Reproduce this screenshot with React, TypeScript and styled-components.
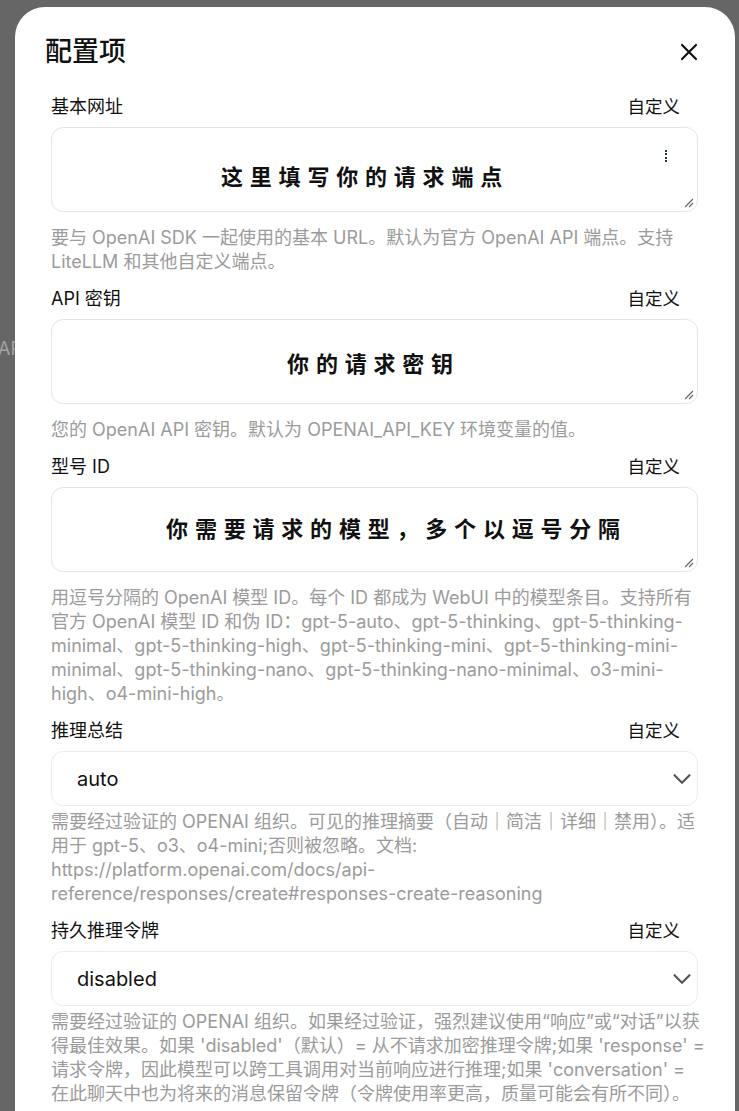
import React from 'react'
import styled, { createGlobalStyle } from 'styled-components'

const GlobalStyle = createGlobalStyle`
  html, body {
    margin: 0;
    padding: 0;
  }
  body {
    background: #666;
    font-family: Inter, 'Noto Sans CJK SC', sans-serif;
    overflow: hidden;
  }
`

const Screen = styled.div`
  position: relative;
  height: 1111px;
  padding: 7px 4px 0 15px;
  box-sizing: border-box;
  overflow: hidden;
`
// page text peeking out from behind the dialog
const BehindText = styled.span`
  position: absolute;
  left: -2px;
  top: 338px;
  font-size: 18px;
  color: #a3a3a3;
`
const Modal = styled.div`
  position: relative;
  background: #fff;
  border-radius: 30px 30px 0 0;
  padding: 29px 37px 0 30px;
  min-height: 1104px;
  box-sizing: border-box;
`
const Header = styled.div`
  display: flex;
  align-items: center;
  justify-content: space-between;
  height: 32px;
  margin-bottom: 25px;
`
const Title = styled.h2`
  margin: 0;
  font-size: 27px;
  font-weight: 500;
  line-height: 32px;
  color: #111;
`
const CloseButton = styled.button`
  display: flex;
  border: 0;
  padding: 0;
  background: none;
  cursor: pointer;
`
const Fields = styled.div`
  display: flex;
  flex-direction: column;
  padding-left: 6px;
`
const Field = styled.div`
  display: flex;
  flex-direction: column;
  margin-bottom: 11px;
`
const LabelRow = styled.div`
  display: flex;
  align-items: center;
  justify-content: space-between;
  height: 24px;
  margin-bottom: 10px;
  font-size: 18px;
  color: #111;
`
const CustomToggle = styled.span`
  padding-right: 18px;
  font-size: 17.5px;
  cursor: pointer;
`
const InputBox = styled.div<{ $lift: number }>`
  position: relative;
  height: 85px;
  border: 1px solid #e6e6e6;
  border-radius: 12px;
  box-sizing: border-box;
  display: flex;
  align-items: center;
  justify-content: center;
  padding-top: ${(p) => Math.max(0, p.$lift)}px;
  padding-bottom: ${(p) => Math.max(0, -p.$lift)}px;
`
const Hint = styled.span<{ $shift: number }>`
  font-family: 'Noto Sans CJK SC', sans-serif;
  font-size: 22px;
  font-weight: 700;
  letter-spacing: 6.8px;
  color: #111;
  margin-left: ${(p) => p.$shift}px;
`
const Caret = styled.span`
  position: absolute;
  top: 22px;
  right: 30px;
  height: 12px;
  border-left: 2px dotted #1d3557;
`
const Grip = styled.svg`
  position: absolute;
  right: 3px;
  bottom: 3px;
`
const SelectBox = styled.div`
  height: 55px;
  border: 1px solid #ececec;
  border-radius: 12px;
  box-sizing: border-box;
  display: flex;
  align-items: center;
  justify-content: space-between;
  padding: 0 0 0 25px;
  font-size: 20px;
  color: #111;
`
const Help = styled.div<{ $gap: number }>`
  margin-top: ${(p) => p.$gap}px;
  font-size: 18px;
  line-height: 24px;
  color: #9b9b9b;
`
const HelpLine = styled.span`
  display: block;
  white-space: nowrap;
`

type TextField = { kind: 'text'; label: string; hint: string; shift: number; lift: number; caret?: boolean; help: string[] }
type ChoiceField = { kind: 'select'; label: string; value: string; help: string[] }

const fields: (TextField | ChoiceField)[] = [
  {
    kind: 'text',
    label: '基本网址',
    hint: '这里填写你的请求端点',
    shift: -19,
    lift: 10,
    caret: true,
    help: [
      '要与 OpenAI SDK 一起使用的基本 URL。默认为官方 OpenAI API 端点。支持',
      'LiteLLM 和其他自定义端点。',
    ],
  },
  {
    kind: 'text',
    label: 'API 密钥',
    hint: '你的请求密钥',
    shift: -2,
    lift: 0,
    help: ['您的 OpenAI API 密钥。默认为 OPENAI_API_KEY 环境变量的值。'],
  },
  {
    kind: 'text',
    label: '型号 ID',
    hint: '你需要请求的模型，多个以逗号分隔',
    shift: 44,
    lift: -6,
    help: [
      '用逗号分隔的 OpenAI 模型 ID。每个 ID 都成为 WebUI 中的模型条目。支持所有',
      '官方 OpenAI 模型 ID 和伪 ID：gpt-5-auto、gpt-5-thinking、gpt-5-thinking-',
      'minimal、gpt-5-thinking-high、gpt-5-thinking-mini、gpt-5-thinking-mini-',
      'minimal、gpt-5-thinking-nano、gpt-5-thinking-nano-minimal、o3-mini-',
      'high、o4-mini-high。',
    ],
  },
  {
    kind: 'select',
    label: '推理总结',
    value: 'auto',
    help: [
      '需要经过验证的 OPENAI 组织。可见的推理摘要（自动｜简洁｜详细｜禁用）。适',
      '用于 gpt-5、o3、o4-mini;否则被忽略。文档:',
      'https://platform.openai.com/docs/api-',
      'reference/responses/create#responses-create-reasoning',
    ],
  },
  {
    kind: 'select',
    label: '持久推理令牌',
    value: 'disabled',
    help: [
      '需要经过验证的 OPENAI 组织。如果经过验证，强烈建议使用“响应”或“对话”以获',
      "得最佳效果。如果 'disabled'（默认）= 从不请求加密推理令牌;如果 'response' =",
      "请求令牌，因此模型可以跨工具调用对当前响应进行推理;如果 'conversation' =",
      '在此聊天中也为将来的消息保留令牌（令牌使用率更高，质量可能会有所不同）。',
    ],
  },
]

function CloseIcon() {
  return (
    <svg width="18" height="18" viewBox="0 0 18 18" fill="none" stroke="#111" strokeWidth="2.2" strokeLinecap="round">
      <path d="M2 2 16 16M16 2 2 16" />
    </svg>
  )
}

function Chevron() {
  return (
    <svg width="30" height="30" viewBox="0 0 24 24" fill="none" stroke="#555" strokeWidth="1.7" strokeLinecap="round" strokeLinejoin="round">
      <path d="m6 9 6 6 6-6" />
    </svg>
  )
}

function App() {
  return (
    <Screen>
      <GlobalStyle />
      <BehindText>API</BehindText>
      <Modal>
        <Header>
          <Title>配置项</Title>
          <CloseButton aria-label="关闭">
            <CloseIcon />
          </CloseButton>
        </Header>
        <Fields>
          {fields.map((f) => (
            <Field key={f.label}>
              <LabelRow>
                <span>{f.label}</span>
                <CustomToggle>自定义</CustomToggle>
              </LabelRow>
              {f.kind === 'text' ? (
                <InputBox $lift={f.lift}>
                  <Hint $shift={f.shift}>{f.hint}</Hint>
                  {f.caret && <Caret />}
                  <Grip width="10" height="10" viewBox="0 0 10 10" stroke="#666" strokeWidth="1.2">
                    <path d="M9 1 1 9M9 5 5 9" />
                  </Grip>
                </InputBox>
              ) : (
                <SelectBox>
                  <span>{f.value}</span>
                  <Chevron />
                </SelectBox>
              )}
              <Help $gap={f.kind === 'text' ? 14 : 4}>
                {f.help.map((line) => (
                  <HelpLine key={line}>{line}</HelpLine>
                ))}
              </Help>
            </Field>
          ))}
        </Fields>
      </Modal>
    </Screen>
  )
}

export default App
